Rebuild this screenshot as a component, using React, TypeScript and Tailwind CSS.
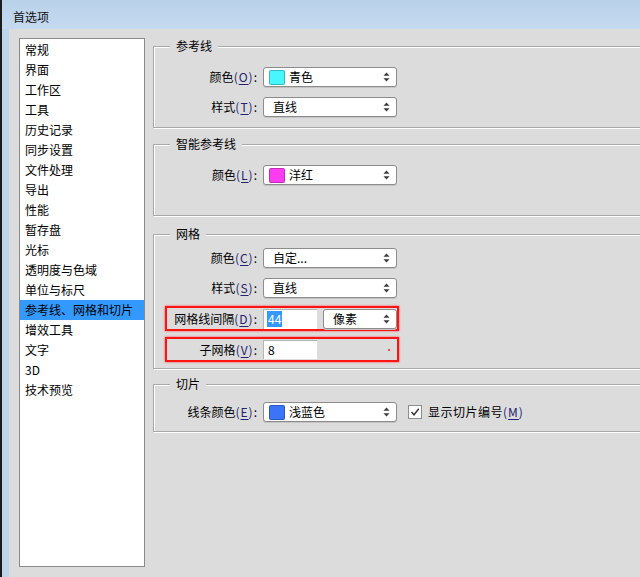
import React from 'react';

const menuItems = [
  '常规',
  '界面',
  '工作区',
  '工具',
  '历史记录',
  '同步设置',
  '文件处理',
  '导出',
  '性能',
  '暂存盘',
  '光标',
  '透明度与色域',
  '单位与标尺',
  '参考线、网格和切片',
  '增效工具',
  '文字',
  '3D',
  '技术预览',
];

// 带下划线的快捷键字母
const Key = ({ k }: { k: string }) => (
  <span className="text-[#22226e] tracking-[1px]">
    (<span className="underline underline-offset-2">{k}</span>)
  </span>
);

const Arrows = () => (
  <svg width="7" height="10" viewBox="0 0 7 10" className="ml-auto shrink-0">
    <path d="M3.5 0.5 L6.5 3.8 H0.5 Z" fill="#3a3a3a" />
    <path d="M0.5 6.2 H6.5 L3.5 9.5 Z" fill="#3a3a3a" />
  </svg>
);

interface SelectProps {
  width: string;
  text: string;
  swatch?: string;
}

const Select = ({ width, text, swatch }: SelectProps) => (
  <div
    className={`${width} h-[20px] shrink-0 flex items-center rounded-[3px] border border-[#8c8c8c] bg-white shadow-[0_1px_0_#c4c4c4] pr-[6px] ${
      swatch ? 'pl-[5px]' : 'pl-[9px]'
    }`}
  >
    {swatch && (
      <span
        className="w-[16px] h-[15px] rounded-[2px] border border-black/25 shrink-0 mr-[4px]"
        style={{ backgroundColor: swatch }}
      />
    )}
    <span className="leading-[18px]">{text}</span>
    <Arrows />
  </div>
);

const Group = ({
  title,
  className,
  children,
}: {
  title: string;
  className: string;
  children: React.ReactNode;
}) => (
  <div
    className={`relative w-[540px] border border-[#a9a9a9] shadow-[inset_1px_1px_0_#ffffff,1px_1px_0_#ffffff] ${className}`}
  >
    <span className="absolute left-[16px] -top-[10px] px-[6px] bg-[#dcdcdc] leading-[18px] text-[12px]">
      {title}
    </span>
    {children}
  </div>
);

const Row = ({ label, children, className }: { label: React.ReactNode; children: React.ReactNode; className?: string }) => (
  <div className={`flex items-center ${className ?? ''}`}>
    <div className="w-[103px] text-right shrink-0 leading-[20px]">{label}</div>
    <div className="ml-[6px] flex items-center">{children}</div>
  </div>
);

export default function App() {
  return (
    <div className="w-[640px] h-[577px] overflow-hidden flex bg-[#bcd4ec] text-[12px] text-black font-['Noto_Sans_CJK_SC','Microsoft_YaHei',sans-serif]">
      <div className="w-[2px] bg-[#1c1c1c] shrink-0" />
      <div className="flex-1 flex flex-col min-w-0">
        {/* 标题栏 */}
        <div className="h-[29px] shrink-0 flex items-center pl-[11px] pt-[4px] bg-linear-to-b from-[#b9d1ea] to-[#c5daef]">
          <span className="text-[12px] text-[#111]">首选项</span>
        </div>
        <div className="flex-1 flex min-h-0">
          <div className="w-[7px] shrink-0 bg-[#bcd4ec]" />
          <div className="flex-1 bg-[#dcdcdc] flex pl-[10px] pt-[9px] min-w-0">
            {/* 左侧列表 */}
            <div className="w-[126px] h-[529px] shrink-0 bg-white border border-[#8a8a8a] pt-[1px]">
              {menuItems.map((item) => (
                <div
                  key={item}
                  className={`h-[20px] leading-[20px] pl-[5px] ${
                    item === '参考线、网格和切片' ? 'bg-[#3399ff]' : ''
                  }`}
                >
                  {item}
                </div>
              ))}
            </div>

            {/* 右侧设置 */}
            <div className="ml-[8px] flex flex-col">
              <Group title="参考线" className="mt-[8px] h-[82px] pt-[20px]">
                <Row label={<>颜色<Key k="O" />:</>}>
                  <Select width="w-[134px]" text="青色" swatch="#48f6ff" />
                </Row>
                <Row label={<>样式<Key k="T" />:</>} className="mt-[10px]">
                  <Select width="w-[134px]" text="直线" />
                </Row>
              </Group>

              <Group title="智能参考线" className="mt-[16px] h-[72px] pt-[20px]">
                <Row label={<>颜色<Key k="L" />:</>}>
                  <Select width="w-[134px]" text="洋红" swatch="#ff3cf2" />
                </Row>
              </Group>

              <Group title="网格" className="mt-[18px] h-[135px] pt-[13px]">
                <Row label={<>颜色<Key k="C" />:</>}>
                  <Select width="w-[134px]" text="自定..." />
                </Row>
                <Row label={<>样式<Key k="S" />:</>} className="mt-[10px]">
                  <Select width="w-[134px]" text="直线" />
                </Row>

                <div className="ml-[11px] mt-[8px] w-[234px] h-[25px] border-2 border-[#ff1414] shadow-[0_0_2px_#ff4040] flex items-center">
                  <div className="w-[90px] text-right shrink-0 leading-[20px]">
                    网格线间隔<Key k="D" />:
                  </div>
                  <div className="ml-[6px] w-[54px] h-[20px] bg-white border-t border-l border-[#b4b4b4] flex items-center pl-[3px]">
                    <span className="bg-[#3399ff] text-white leading-[16px] px-[1px]">44</span>
                  </div>
                  <div className="ml-[6px]">
                    <Select width="w-[74px]" text="像素" />
                  </div>
                </div>

                <div className="ml-[11px] mt-[6px] w-[234px] h-[25px] border-2 border-[#ff1414] shadow-[0_0_2px_#ff4040] flex items-center">
                  <div className="w-[90px] text-right shrink-0 leading-[20px]">
                    子网格<Key k="V" />:
                  </div>
                  <div className="ml-[6px] w-[54px] h-[19px] bg-white border-t border-l border-[#b4b4b4] flex items-center pl-[4px]">
                    8
                  </div>
                  <div className="ml-auto mr-[7px] w-[2px] h-[2px] bg-[#ff5050]" />
                </div>
              </Group>

              <Group title="切片" className="mt-[15px] h-[48px] pt-[17px]">
                <Row label={<>线条颜色<Key k="E" />:</>}>
                  <Select width="w-[134px]" text="浅蓝色" swatch="#3b74f6" />
                  <div className="ml-[11px] w-[14px] h-[14px] bg-white border border-[#8e8e8e] flex items-center justify-center shrink-0">
                    <svg width="10" height="10" viewBox="0 0 10 10">
                      <path d="M1.5 5 L4 7.8 L8.8 1.8" fill="none" stroke="#333" strokeWidth="1.4" />
                    </svg>
                  </div>
                  <span className="ml-[6px] whitespace-nowrap leading-[20px] tracking-[0.5px]">
                    显示切片编号<Key k="M" />
                  </span>
                </Row>
              </Group>
            </div>
          </div>
        </div>
      </div>
    </div>
  );
}
